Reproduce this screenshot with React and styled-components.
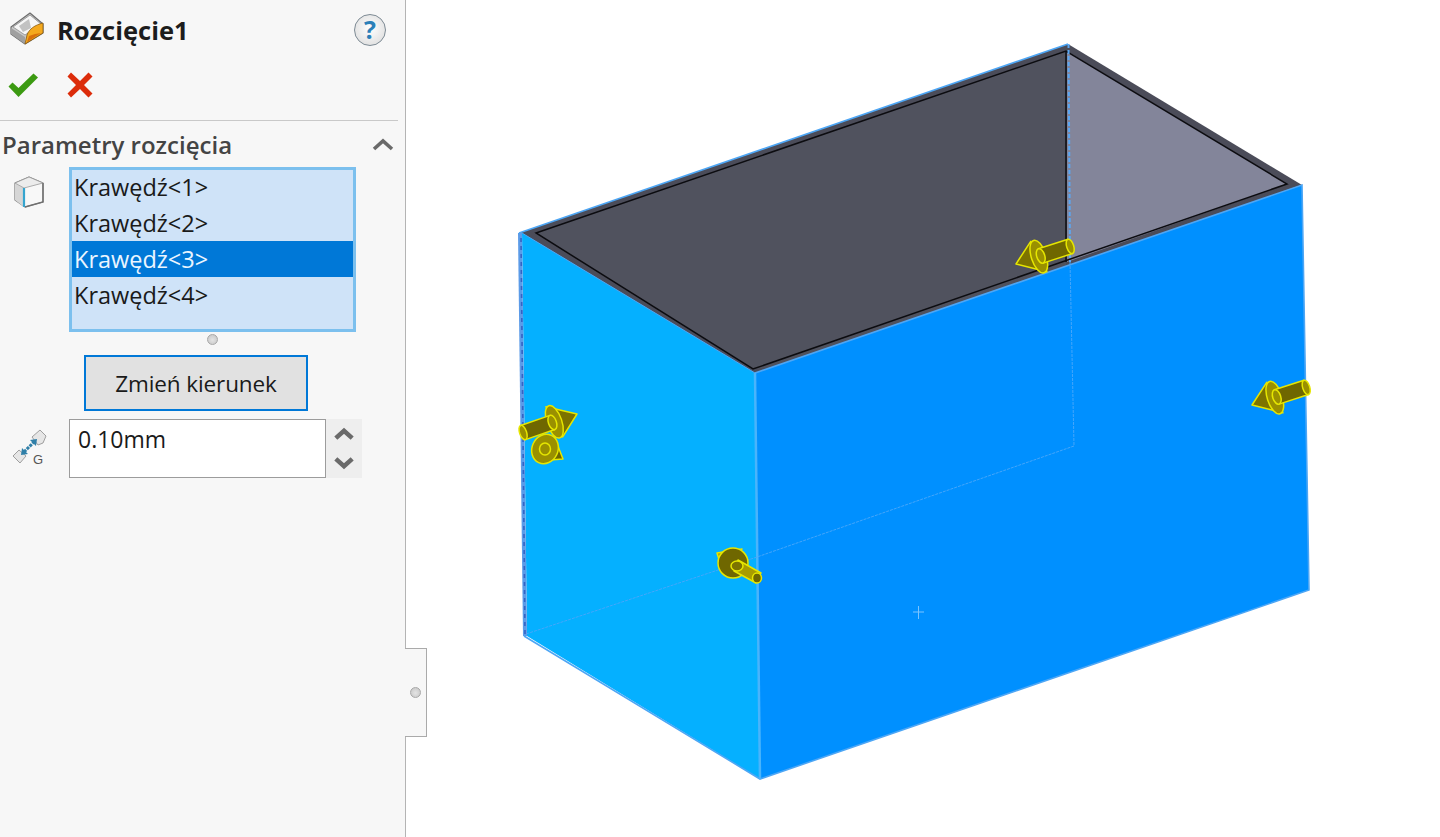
import React from 'react';
import styled, { createGlobalStyle } from 'styled-components';

const GlobalStyle = createGlobalStyle`
  html, body { margin: 0; padding: 0; height: 100%; overflow: hidden; background: #fff; }
  body { font-family: "Open Sans", "Noto Sans", "Liberation Sans", sans-serif; }
`;

const Page = styled.div`
  position: relative;
  display: flex;
  width: 1440px;
  height: 837px;
`;

const Panel = styled.aside`
  width: 405px;
  flex: none;
  background: #f7f7f7;
  border-right: 1px solid #b4b4b4;
`;

const TitleRow = styled.div`
  display: flex;
  align-items: center;
  height: 59px;
  padding-left: 9px;
  padding-right: 19px;
`;

const Title = styled.h1`
  flex: 1;
  margin: 0 0 0 12px;
  font-size: 25.5px;
  font-weight: 700;
  color: #1c1c1c;
`;

const HelpBadge = styled.div`
  width: 32px;
  height: 32px;
  box-sizing: border-box;
  border-radius: 50%;
  border: 1.5px solid #7d8a94;
  background: radial-gradient(circle at 50% 45%, #ffffff, #d8d8d8);
  color: #2b7fb8;
  font-size: 25px;
  font-weight: 700;
  line-height: 29px;
  text-align: center;
`;

const Actions = styled.div`
  display: flex;
  align-items: center;
  height: 51px;
  padding-left: 7px;
  gap: 28px;
`;

const Rule = styled.hr`
  margin: 10px 7px 0 0;
  border: 0;
  border-top: 1px solid #c9c9c9;
`;

const SectionHead = styled.div`
  display: flex;
  align-items: center;
  justify-content: space-between;
  height: 46px;
  padding: 0 11px 0 2px;
`;

const SectionTitle = styled.h2`
  margin: 0;
  font-size: 24px;
  font-weight: 600;
  color: #444;
`;

const ListRow = styled.div`
  display: flex;
  align-items: flex-start;
`;

const IconCell = styled.div`
  width: 69px;
  flex: none;
  padding: ${(p) => p.$top || 0}px 0 0 ${(p) => p.$left || 0}px;
  box-sizing: border-box;
`;

const EdgeList = styled.ul`
  width: 283px;
  height: 161px;
  margin: 0;
  padding: 0;
  list-style: none;
  background: #cfe3f8;
  border: 2px solid #7cc0ee;
  box-shadow: inset 0 0 0 1px #7cc0ee;
`;

const EdgeItem = styled.li`
  height: 36px;
  line-height: 37px;
  margin: 0 1px;
  padding-left: 2px;
  font-size: 23.5px;
  color: ${(p) => (p.$selected ? '#eaf5ff' : '#1a1a1a')};
  background: ${(p) => (p.$selected ? '#0078d7' : 'transparent')};
`;

const GripRow = styled.div`
  display: flex;
  justify-content: flex-start;
  padding: 2px 0 0 207px;
  height: 23px;
  box-sizing: border-box;
`;

const Grip = styled.span`
  display: block;
  width: 11px;
  height: 11px;
  border-radius: 50%;
  box-sizing: border-box;
  background: radial-gradient(circle at 50% 55%, #e4e4e4, #c4c4c4);
  border: 1px solid #a8a8a8;
`;

const ActionButton = styled.button`
  display: block;
  width: 224px;
  height: 56px;
  margin: 0 0 8px 84px;
  padding: 0;
  box-sizing: border-box;
  background: #e1e1e1;
  border: 2px solid #0078d7;
  font-family: inherit;
  font-size: 22.5px;
  letter-spacing: -0.1px;
  color: #1a1a1a;
`;

const ValueRow = styled.div`
  display: flex;
  align-items: flex-start;
`;

const ValueBox = styled.div`
  width: 257px;
  height: 59px;
  box-sizing: border-box;
  padding: 3px 0 0 8px;
  background: #fff;
  border: 1px solid #9c9c9c;
  font-size: 23px;
  color: #1a1a1a;
`;

const Spinner = styled.div`
  display: flex;
  flex-direction: column;
  width: 36px;
  height: 59px;
  background: #eeeeee;
`;

const SpinButton = styled.div`
  flex: 1;
  display: flex;
  align-items: center;
  justify-content: center;
`;

const Viewport = styled.svg`
  display: block;
  flex: 1;
  height: 837px;
`;

const SideTab = styled.div`
  position: absolute;
  left: 405px;
  top: 648px;
  width: 21px;
  height: 87px;
  display: flex;
  align-items: center;
  justify-content: center;
  background: #f7f7f7;
  border: 1px solid #aaa;
  border-left: 0;
`;

const PartIcon = () => (
  <svg width="36" height="36" viewBox="0 0 36 36">
    <path d="M21 1 L34 12 L34 21 L16 32 L2 22 L2 15 Z" fill="#c9c9c9" stroke="#6e6e6e" strokeWidth="1.2" strokeLinejoin="round" />
    <path d="M21 3 L32 12 L16 23 L4 15 Z" fill="#f6f6f6" stroke="#8c8c8c" strokeWidth="0.8" />
    <path d="M20 7 L22 16 L14 20 L10 14 Z" fill="#c2c2c2" />
    <path d="M2 16 L16 25 L16 32 L2 22 Z" fill="#a0a0a0" />
    <path d="M16 32 L18 23 C20 17 26 13 34 11 L34 21 Z" fill="#f4a91e" stroke="#8a5a10" strokeWidth="0.8" />
    <path d="M18 30 L20 24 L26 22 L32 21 Z" fill="#d9700c" />
  </svg>
);

const CheckIcon = () => (
  <svg width="32" height="26" viewBox="0 0 32 26">
    <path d="M1.5 14.5 L5.5 10.5 L11.5 16 L26.5 1.5 L31 5.5 L11.5 25 Z" fill="#3c9a12" />
  </svg>
);

const CrossIcon = () => (
  <svg width="26" height="26" viewBox="0 0 26 26">
    <path d="M4 0.5 L13 9 L21.5 0.5 L25.5 4.5 L17 13 L25.5 21.5 L21.5 25.5 L13 17 L4 25.5 L0.5 21.5 L9 13 L0.5 4.5 Z" fill="#dc2c0a" />
  </svg>
);

const Chevron = ({ up, w = 22, h = 13, weight = 3.6 }) => (
  <svg width={w} height={h} viewBox="0 0 22 13">
    <path d={up ? 'M2 11 L11 3 L20 11' : 'M2 2 L11 10 L20 2'} fill="none" stroke="#6a6a6a" strokeWidth={weight} />
  </svg>
);

const CubeIcon = () => (
  <svg width="30" height="32" viewBox="0 0 30 32">
    <path d="M1 7 L15 1 L29 7 L29 26 L11 31 L1 24 Z" fill="#f8f8f8" stroke="#7d7d7d" strokeWidth="1.2" strokeLinejoin="round" />
    <path d="M1 7 L10 12 L10 31 L1 24 Z" fill="#d6d6d6" />
    <path d="M15 1 L29 7 L10 12 L1 7 Z" fill="#ececec" stroke="#9a9a9a" strokeWidth="0.8" />
    <path d="M10 12 L10 31" stroke="#35a5cf" strokeWidth="2.2" />
    <path d="M29 7 L29 26 L11 31" fill="none" stroke="#6f6f6f" strokeWidth="1.4" />
  </svg>
);

const GapIcon = () => (
  <svg width="38" height="38" viewBox="0 0 38 38">
    <path d="M22 9 L30 2 L36 8 L33 15 L28 17 Z" fill="#e6e6e6" stroke="#8a8a8a" strokeWidth="0.8" />
    <path d="M3 28 L9 22 L16 28 L10 35 Z" fill="#e6e6e6" stroke="#8a8a8a" strokeWidth="0.8" />
    <path d="M14 24 L24 14" stroke="#2f7fa8" strokeWidth="3" strokeDasharray="3 1" />
    <path d="M20 12 L27 11 L26 18 Z M11 27 L12 20 L18 26 Z" fill="#2f7fa8" />
    <text x="23" y="36" fontFamily="Liberation Sans, sans-serif" fontSize="13" fill="#555">G</text>
  </svg>
);

// strzałka: grot w (0,0), trzon idzie w prawo, obrót w stopniach
const Arrow = ({ x, y, angle }) => (
  <g transform={`translate(${x} ${y}) rotate(${angle})`} stroke="#e6e600" strokeWidth="1.5" strokeLinejoin="round">
    <path d="M0 0 L21 -17 L27 17 Z" fill="#7d7300" />
    <ellipse cx="24" cy="0" rx="7.5" ry="17" fill="#9a9000" />
    <path d="M26 -7.5 L57 -7.5 L57 7.5 L26 7.5 Z" fill="#6f6700" />
    <ellipse cx="57" cy="0" rx="3.5" ry="7.5" fill="#9a9000" />
    <ellipse cx="26" cy="0" rx="4" ry="7.5" fill="#9a9000" />
  </g>
);

const FacingArrowLow = () => (
  <g stroke="#e6e600" strokeWidth="1.5" strokeLinejoin="round">
    <path d="M537 461 L563 459 L554 436 Z" fill="#6f6700" />
    <ellipse cx="545" cy="449" rx="13" ry="15" transform="rotate(25 545 449)" fill="#9a9000" />
    <ellipse cx="545" cy="449" rx="5.5" ry="6" fill="#9a9000" />
  </g>
);

const FacingArrowFront = () => (
  <g stroke="#e6e600" strokeWidth="1.5" strokeLinejoin="round">
    <path d="M717 553 L723 572 L742 549 Z" fill="#a89c00" />
    <ellipse cx="733" cy="563" rx="15" ry="15" fill="#6f6700" />
    <path d="M738 560 L761 573 L756 583 L734 571 Z" fill="#a89c00" />
    <ellipse cx="757" cy="578" rx="4.5" ry="5" fill="#6f6700" />
    <ellipse cx="737" cy="566" rx="6" ry="5" fill="#7d7300" />
  </g>
);

const Model = () => (
  <Viewport viewBox="406 0 1034 837">
    {/* wnętrze */}
    <polygon points="519,233 1068,44 1302,185 755,375" fill="#4b4c59" />
    <polygon points="536,233 1066,51 1066,340 753,369" fill="#50525e" />
    <polygon points="1067,51 1287,184 1067,262" fill="#83859a" />
    <polygon points="536,233 1066,51 1287,184 753,369" fill="none" stroke="#0c0c10" strokeWidth="1.5" />
    <line x1="1066" y1="51" x2="1066" y2="262" stroke="#0c0c10" strokeWidth="1.5" />

    {/* ściany */}
    <polygon points="522,233 755,373 760,779 527,636" fill="#05b0ff" />
    <polygon points="755,373 1302,185 1309,590 760,779" fill="#0090ff" />
    <polygon points="518,233 522,233 527,636 523,636" fill="#5b9be8" />

    {/* krawędzie */}
    <g fill="none" stroke="#4da6f5" strokeWidth="1.6">
      <path d="M519 233 L1068 44" />
      <path d="M522 233 L755 373" strokeWidth="1" />
      <path d="M755 373 L1302 185 L1309 590 L760 779 L524 636" />
      <path d="M755 373 L760 779" stroke="#4ab4fb" strokeWidth="2.5" />
    </g>
    <path d="M521 238 L525 634" stroke="#3563c4" strokeWidth="1.6" strokeDasharray="4 4" fill="none" />
    <path d="M1068.5 44 L1070 262" stroke="#5aa8f5" strokeWidth="2" strokeDasharray="4 2" fill="none" />
    <path d="M1070 262 L1074 446 L757 557 L526 634" stroke="#45a6fb" strokeWidth="1" strokeDasharray="3 1" fill="none" />
    <path d="M913 612 H924 M918.5 606 V619" stroke="#7cc4ff" strokeWidth="1" />

    <Arrow x={1016} y={264} angle={-18} />
    <Arrow x={1252} y={405} angle={-18} />
    <FacingArrowLow />
    <Arrow x={577} y={414} angle={161} />
    <FacingArrowFront />
  </Viewport>
);

const edges = ['Krawędź<1>', 'Krawędź<2>', 'Krawędź<3>', 'Krawędź<4>'];

export default function App() {
  return (
    <Page>
      <GlobalStyle />
      <Panel>
        <TitleRow>
          <PartIcon />
          <Title>Rozcięcie1</Title>
          <HelpBadge>?</HelpBadge>
        </TitleRow>
        <Actions>
          <CheckIcon />
          <CrossIcon />
        </Actions>
        <Rule />
        <SectionHead>
          <SectionTitle>Parametry rozcięcia</SectionTitle>
          <Chevron up />
        </SectionHead>
        <ListRow>
          <IconCell $top={9} $left={14}>
            <CubeIcon />
          </IconCell>
          <EdgeList>
            {edges.map((edge, i) => (
              <EdgeItem key={edge} $selected={i === 2}>{edge}</EdgeItem>
            ))}
          </EdgeList>
        </ListRow>
        <GripRow>
          <Grip />
        </GripRow>
        <ActionButton>Zmień kierunek</ActionButton>
        <ValueRow>
          <IconCell $top={9} $left={10}>
            <GapIcon />
          </IconCell>
          <ValueBox>0.10mm</ValueBox>
          <Spinner>
            <SpinButton><Chevron up w={20} h={14} weight={5} /></SpinButton>
            <SpinButton><Chevron w={20} h={14} weight={5} /></SpinButton>
          </Spinner>
        </ValueRow>
      </Panel>
      <Model />
      <SideTab>
        <Grip />
      </SideTab>
    </Page>
  );
}
